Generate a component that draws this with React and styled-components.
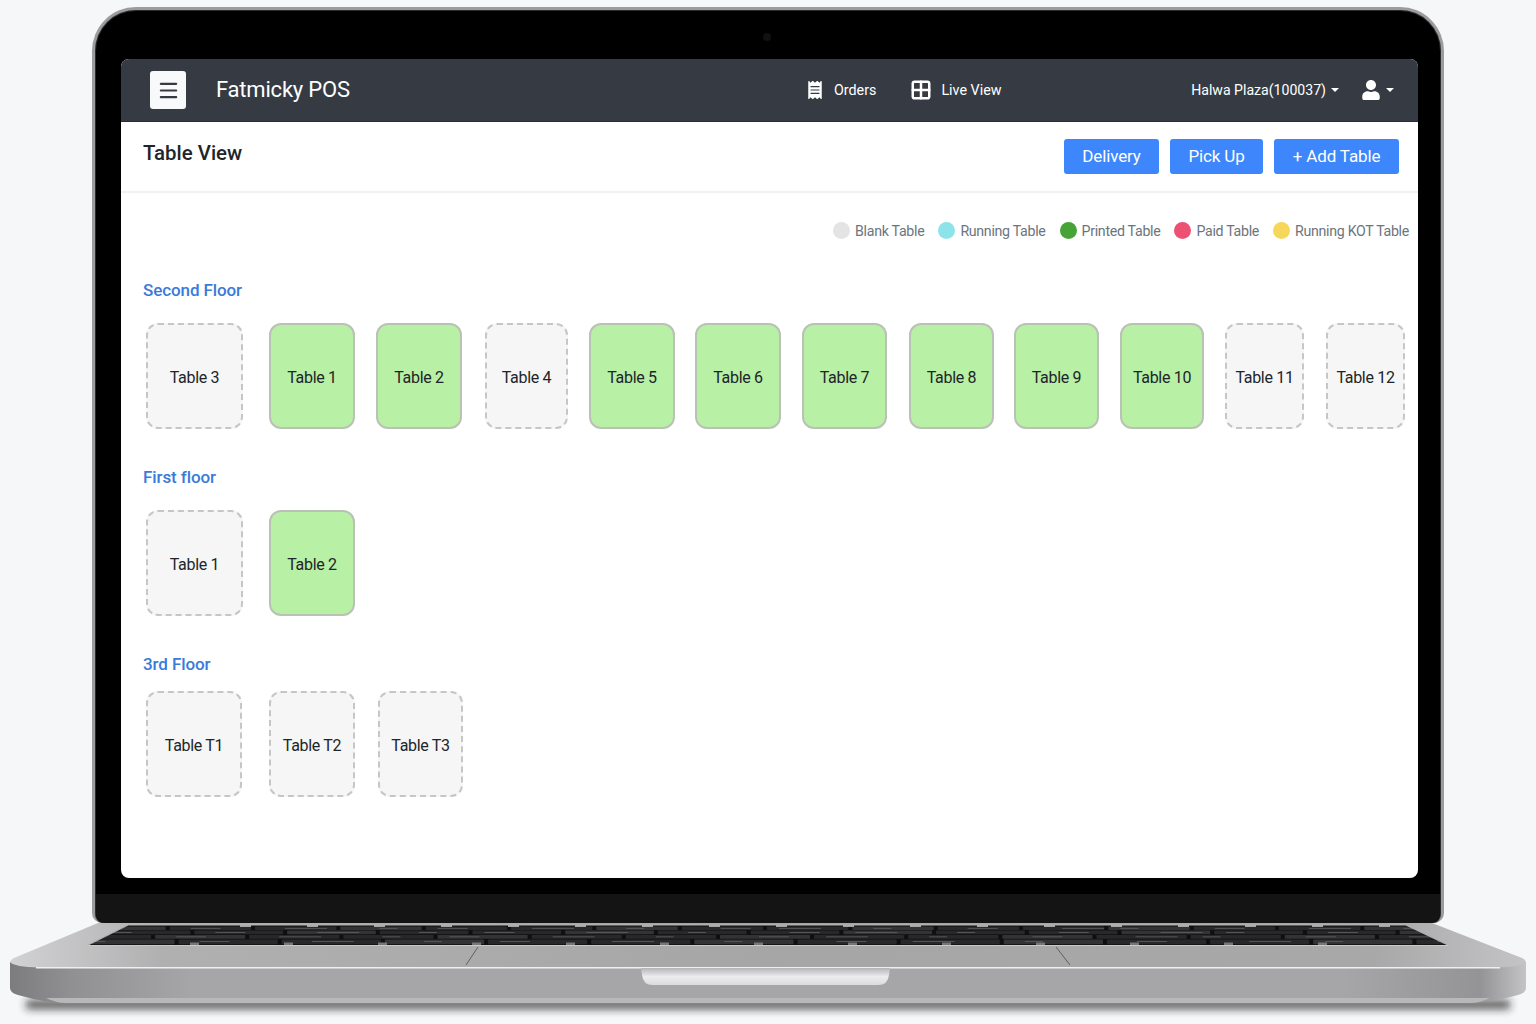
import React from "react";
import styled, { createGlobalStyle } from "styled-components";
import { FaReceipt, FaUser } from "react-icons/fa";
import { Grid2x2, Menu } from "lucide-react";

const GlobalStyle = createGlobalStyle`
    html, body {
        margin: 0;
        padding: 0;
        background: #f6f7f9;
        font-family: Roboto, "Liberation Sans", sans-serif;
    }
`;

const Page = styled.div`
    width: 1536px;
    height: 1024px;
    padding-top: 7px;
    box-sizing: border-box;
    overflow: hidden;
    display: flex;
    flex-direction: column;
    align-items: center;
`;

const Lid = styled.div`
    position: relative;
    width: 1352px;
    height: 916px;
    box-sizing: border-box;
    padding: 49px 23px 0 26px;
    background: #000;
    border: 3px solid #9c9c9e;
    border-bottom: 0;
    border-radius: 44px 44px 10px 10px;
    box-shadow: inset 0 0 0 1px #2c2c2c;
`;

const Camera = styled.span`
    position: absolute;
    top: 23px;
    left: 668px;
    width: 8px;
    height: 8px;
    border-radius: 50%;
    background: #101112;
`;

const Hinge = styled.div`
    height: 29px;
    margin: 16px -22px 0 -25px;
    background: #141414;
    border-radius: 0 0 9px 9px;
`;

const Screen = styled.div`
    height: 819px;
    background: #fff;
    border-radius: 8px;
    overflow: hidden;
`;

const TopBar = styled.header`
    height: 63px;
    box-sizing: border-box;
    background: #363b43;
    border-bottom: 1px solid #2a2e34;
    display: grid;
    grid-template-columns: 650px 1fr auto;
    align-items: center;
    padding: 0 24px 0 29px;
    color: #fff;
`;

const Brand = styled.div`
    display: flex;
    align-items: center;
    gap: 30px;
`;

const MenuButton = styled.button`
    width: 36px;
    height: 38px;
    padding: 0;
    border: 0;
    border-radius: 3px;
    background: #f8f9fa;
    color: #343a40;
    display: flex;
    align-items: center;
    justify-content: center;
`;

const BrandName = styled.span`
    font-size: 22px;
    letter-spacing: -0.2px;
    padding-bottom: 2px;
`;

const NavLinks = styled.nav`
    display: flex;
    align-items: center;
    gap: 34px;
    padding-left: 6px;
`;

const NavLink = styled.a`
    display: flex;
    align-items: center;
    gap: ${(p) => p.$gap}px;
    font-size: 14.3px;
    color: #fff;
`;

const UserMenu = styled.div`
    display: flex;
    align-items: center;
    gap: 22px;
    font-size: 14.1px;
`;

const Dropdown = styled.span`
    display: flex;
    align-items: center;
    gap: 5px;
    &::after {
        content: "";
        border-top: 4px solid #fff;
        border-left: 4px solid transparent;
        border-right: 4px solid transparent;
    }
`;

const PageHeader = styled.div`
    height: 71px;
    box-sizing: border-box;
    border-bottom: 2px solid #f1f1f1;
    display: flex;
    justify-content: space-between;
    align-items: flex-start;
    padding: 17px 19px 0 22px;
`;

const Title = styled.h1`
    margin: 1px 0 0;
    font-size: 20.4px;
    line-height: 27px;
    font-weight: 500;
    color: #212529;
`;

const Actions = styled.div`
    display: flex;
    gap: 11px;
`;

const ActionButton = styled.button`
    height: 35px;
    width: ${(p) => p.$width}px;
    padding: 0 0 2px;
    border: 0;
    border-radius: 3px;
    background: #3d86fb;
    color: #fff;
    font-family: inherit;
    font-size: 17px;
    letter-spacing: -0.15px;
`;

const Legend = styled.div`
    display: flex;
    justify-content: flex-end;
    gap: 14px;
    padding: 29px 9px 0 0;
    height: 17px;
`;

const LegendItem = styled.span`
    display: flex;
    align-items: center;
    gap: 5px;
    font-size: 14.2px;
    letter-spacing: -0.3px;
    color: #6c757d;
    &::before {
        content: "";
        width: 17px;
        height: 17px;
        border-radius: 50%;
        background: ${(p) => p.$color};
    }
`;

const Floor = styled.section`
    padding: 0 0 0 22px;
    margin-top: ${(p) => p.$top}px;
`;

const FloorName = styled.h2`
    margin: 0;
    height: 22px;
    font-size: 17px;
    letter-spacing: -0.1px;
    line-height: 22px;
    font-weight: 500;
    color: #3a7bd9;
`;

const TableRow = styled.div`
    display: flex;
    padding-left: 3px;
    margin-top: ${(p) => p.$top}px;
`;

const TableCard = styled.div`
    width: ${(p) => p.$width}px;
    height: 106px;
    margin-right: ${(p) => p.$after}px;
    padding-top: 2px;
    box-sizing: border-box;
    flex: none;
    display: flex;
    align-items: center;
    justify-content: center;
    border-radius: 12px;
    font-size: 16px;
    letter-spacing: -0.32px;
    color: #212529;
    background: ${(p) => (p.$busy ? "#b8f0a5" : "#f6f6f6")};
    border: ${(p) => (p.$busy ? "2px solid #bac2b6" : "2px dashed #c6c6c6")};
`;

const legend = [
    { label: "Blank Table", color: "#e4e4e4" },
    { label: "Running Table", color: "#8ce3ea" },
    { label: "Printed Table", color: "#46a336" },
    { label: "Paid Table", color: "#ee5074" },
    { label: "Running KOT Table", color: "#f7d65c" },
];

const floors = [
    {
        name: "Second Floor",
        top: 40,
        rowTop: 22,
        tables: [
            { name: "Table 3", width: 97, after: 26 },
            { name: "Table 1", width: 86, after: 21, busy: true },
            { name: "Table 2", width: 86, after: 23, busy: true },
            { name: "Table 4", width: 83, after: 21 },
            { name: "Table 5", width: 86, after: 20, busy: true },
            { name: "Table 6", width: 86, after: 21, busy: true },
            { name: "Table 7", width: 85, after: 22, busy: true },
            { name: "Table 8", width: 85, after: 20, busy: true },
            { name: "Table 9", width: 85, after: 21, busy: true },
            { name: "Table 10", width: 84, after: 21, busy: true },
            { name: "Table 11", width: 79, after: 22 },
            { name: "Table 12", width: 79, after: 0 },
        ],
    },
    {
        name: "First floor",
        top: 37,
        rowTop: 22,
        tables: [
            { name: "Table 1", width: 97, after: 26 },
            { name: "Table 2", width: 86, after: 0, busy: true },
        ],
    },
    {
        name: "3rd Floor",
        top: 37,
        rowTop: 16,
        tables: [
            { name: "Table T1", width: 96, after: 27 },
            { name: "Table T2", width: 86, after: 23 },
            { name: "Table T3", width: 85, after: 0 },
        ],
    },
];

// key rows for the keyboard well, x runs from the left edge to the right edge of each row
const keyRows = [
    { y: 926.5, h: 3.4, left: 127, right: 1407, keys: 15 },
    { y: 930.6, h: 3.6, left: 118, right: 1416, keys: 14 },
    { y: 935, h: 3.8, left: 108, right: 1426, keys: 14 },
    { y: 939.6, h: 4.6, left: 97, right: 1438, keys: 13 },
];

const Keyboard = () => (
    <g>
        <clipPath id="well">
            <polygon points="128,925 1406,925 1448,945 88,945" />
        </clipPath>
        <polygon points="128,925 1406,925 1448,945 88,945" fill="#0f0f10" />
        <g clipPath="url(#well)">
            {keyRows.map((row, r) => {
                const pitch = (row.right - row.left) / row.keys;
                return Array.from({ length: row.keys + 1 }, (_, i) => {
                    const x = row.left + (i - 0.5) * pitch + (r % 2) * 30;
                    return (
                        <g key={`${r}-${i}`}>
                            <rect x={x} y={row.y} width={pitch - 4} height={row.h} rx="0.6" fill={(i + r) % 3 === 0 ? "#333335" : "#28282a"} />
                            <rect x={x + 12 + (i % 4) * 9} y={row.y + 1.4} width={18 + (i % 3) * 12} height="0.9" fill="#5a5a5c" />
                        </g>
                    );
                });
            })}
            {Array.from({ length: 18 }, (_, i) => (
                <rect key={`top-${i}`} x={240 + i * 67} y="925" width="11" height="2" fill="#a5a5a7" />
            ))}
            {Array.from({ length: 13 }, (_, i) => (
                <rect key={`low-${i}`} x={190 + i * 94} y="942.5" width="9" height="2.5" fill="#77777a" />
            ))}
        </g>
        <path d="M88 945 L128 925 L1406 925 L1448 945" fill="none" stroke="#b6b6b8" strokeWidth="1.2" />
    </g>
);

const LaptopBase = () => (
    <svg width="1536" height="101" viewBox="0 923 1536 101" style={{ display: "block", flex: "none" }}>
        <defs>
            <linearGradient id="deck" x1="0" y1="0" x2="1" y2="0">
                <stop offset="0" stopColor="#d2d2d4" />
                <stop offset="0.1" stopColor="#b0b0b1" />
                <stop offset="0.5" stopColor="#a6a6a7" />
                <stop offset="0.9" stopColor="#a8a8a9" />
                <stop offset="1" stopColor="#c4c4c6" />
            </linearGradient>
            <linearGradient id="front" x1="0" y1="0" x2="1" y2="0">
                <stop offset="0" stopColor="#7c7c7e" />
                <stop offset="0.04" stopColor="#909092" />
                <stop offset="0.12" stopColor="#a6a6a8" />
                <stop offset="0.88" stopColor="#a6a6a8" />
                <stop offset="0.97" stopColor="#949496" />
                <stop offset="1" stopColor="#c4c4c6" />
            </linearGradient>
            <linearGradient id="notch" x1="0" y1="0" x2="0" y2="1">
                <stop offset="0" stopColor="#b4b4b6" />
                <stop offset="0.5" stopColor="#ececee" />
                <stop offset="1" stopColor="#dcdcde" />
            </linearGradient>
            <filter id="soft" x="-5%" y="-100%" width="110%" height="300%">
                <feGaussianBlur stdDeviation="4" />
            </filter>
        </defs>
        <rect x="26" y="1000" width="1484" height="9" fill="#1c1c1e" opacity="0.75" filter="url(#soft)" />
        <path d="M98 923 L1432 923 L1522 958 Q1526 960 1526 963 L1526 968 L10 968 L10 963 Q10 960 14 958 Z" fill="url(#deck)" />
        <Keyboard />
        <path d="M478 947 L466 965 M1056 947 L1070 965" stroke="#5f5f61" strokeWidth="1" fill="none" />
        <path d="M88 945.5 L1448 945.5" stroke="#c9c9cb" strokeWidth="1" />
        <path d="M10 962 Q14 967 40 967.5 L1496 967.5 Q1522 967 1526 962 L1526 988 Q1526 993 1518 995 Q1490 1003 1470 1003 L66 1003 Q46 1003 18 995 Q10 993 10 988 Z" fill="url(#front)" />
        <path d="M46 998 Q56 1003 66 1003 L1470 1003 Q1480 1003 1490 998 Z" fill="#b8b8ba" />
        <path d="M36 967.8 L1500 967.8" stroke="#efeff0" strokeWidth="1.5" />
        <path d="M641 968 L890 968 L889 975 Q888 985 878 985 L653 985 Q643 985 642 975 Z" fill="url(#notch)" />
    </svg>
);

const App = () => (
    <>
        <GlobalStyle />
        <Page>
            <Lid>
                <Camera />
                <Screen>
                    <TopBar>
                        <Brand>
                            <MenuButton>
                                <Menu size={23} strokeWidth={2.3} />
                            </MenuButton>
                            <BrandName>Fatmicky POS</BrandName>
                        </Brand>
                        <NavLinks>
                            <NavLink $gap={10}>
                                <FaReceipt size={18} />
                                Orders
                            </NavLink>
                            <NavLink $gap={9}>
                                <Grid2x2 size={22} strokeWidth={2.7} />
                                Live View
                            </NavLink>
                        </NavLinks>
                        <UserMenu>
                            <Dropdown>Halwa Plaza(100037)</Dropdown>
                            <Dropdown>
                                <FaUser size={20} />
                            </Dropdown>
                        </UserMenu>
                    </TopBar>
                    <PageHeader>
                        <Title>Table View</Title>
                        <Actions>
                            <ActionButton $width={95}>Delivery</ActionButton>
                            <ActionButton $width={93}>Pick Up</ActionButton>
                            <ActionButton $width={125}>+ Add Table</ActionButton>
                        </Actions>
                    </PageHeader>
                    <Legend>
                        {legend.map((item) => (
                            <LegendItem key={item.label} $color={item.color}>
                                {item.label}
                            </LegendItem>
                        ))}
                    </Legend>
                    {floors.map((floor) => (
                        <Floor key={floor.name} $top={floor.top}>
                            <FloorName>{floor.name}</FloorName>
                            <TableRow $top={floor.rowTop}>
                                {floor.tables.map((table) => (
                                    <TableCard key={table.name} $width={table.width} $after={table.after} $busy={table.busy}>
                                        {table.name}
                                    </TableCard>
                                ))}
                            </TableRow>
                        </Floor>
                    ))}
                </Screen>
                <Hinge />
            </Lid>
            <LaptopBase />
        </Page>
    </>
);

export default App;
